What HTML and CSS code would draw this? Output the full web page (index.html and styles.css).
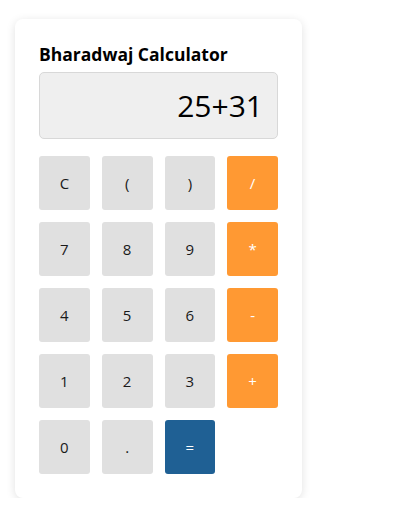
FILE: index.html
```html
<!DOCTYPE html>
<html>
<head>
<meta charset="utf-8">
<link rel="stylesheet" href="styles.css">
</head>
<body>
<div class="card">
  <h2 class="title">Bharadwaj Calculator</h2>
  <div class="display">25+31</div>
  <div class="keys">
    <button class="key">C</button>
    <button class="key">(</button>
    <button class="key">)</button>
    <button class="key op">/</button>
    <button class="key">7</button>
    <button class="key">8</button>
    <button class="key">9</button>
    <button class="key op">*</button>
    <button class="key">4</button>
    <button class="key">5</button>
    <button class="key">6</button>
    <button class="key op">-</button>
    <button class="key">1</button>
    <button class="key">2</button>
    <button class="key">3</button>
    <button class="key op">+</button>
    <button class="key">0</button>
    <button class="key">.</button>
    <button class="key eq">=</button>
  </div>
</div>
</body>
</html>
```

FILE: styles.css
```css
html, body {
  margin: 0;
  padding: 0;
  background: #ffffff;
}
body {
  padding: 19px 0 0 15px;
  font-family: "Open Sans", "Noto Sans", sans-serif;
}
.card {
  width: 239px;
  padding: 24px;
  background: #fff;
  border-radius: 8px;
  box-shadow: 0 2px 10px rgba(0, 0, 0, 0.12);
}
.title {
  margin: 0 0 6px 0;
  font-size: 17.5px;
  font-weight: 700;
  line-height: 23px;
  color: #000;
}
.display {
  box-sizing: border-box;
  height: 67px;
  border: 1px solid #d8d8d8;
  border-radius: 5px;
  background: #efefef;
  text-align: right;
  font-size: 30px;
  line-height: 65px;
  padding-right: 14px;
  color: #000;
  margin-bottom: 17px;
}
.keys {
  display: grid;
  grid-template-columns: repeat(4, 1fr);
  grid-auto-rows: 54px;
  gap: 12px;
}
.key {
  border: none;
  border-radius: 3px;
  background: #e0e0e0;
  font-family: "Open Sans", "Noto Sans", sans-serif;
  font-size: 15px;
  color: #1a1a1a;
  padding: 0;
}
.key.op {
  background: #ff9933;
  color: #fff;
}
.key.eq {
  background: #1f6094;
  color: #fff;
}
```
